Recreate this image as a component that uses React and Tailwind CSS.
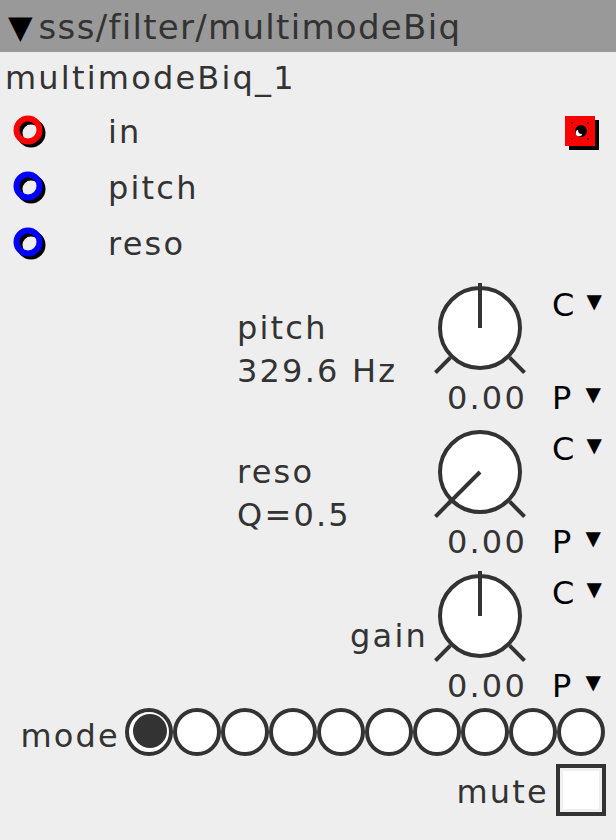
import React from "react";

const font = { fontFamily: '"DejaVu Sans", Verdana, sans-serif' };

// knob drawn around (50,44), angle in degrees clockwise from straight up
const Knob = ({ angle }) => {
    const pt = (a, r) => {
        const t = (a * Math.PI) / 180;
        return [50 + r * Math.sin(t), 44 - r * Math.cos(t)];
    };
    const [nx, ny] = pt(angle, 45);
    const [l1x, l1y] = pt(225, 42);
    const [l2x, l2y] = pt(225, 63);
    const [r1x, r1y] = pt(135, 42);
    const [r2x, r2y] = pt(135, 63);
    return (
        <svg width="100" height="96" viewBox="0 0 100 96" className="overflow-visible block">
            <circle cx="50" cy="44" r="40" fill="#fff" stroke="#333" strokeWidth="4" />
            <line x1={l1x} y1={l1y} x2={l2x} y2={l2y} stroke="#333" strokeWidth="4" />
            <line x1={r1x} y1={r1y} x2={r2x} y2={r2y} stroke="#333" strokeWidth="4" />
            <line x1="50" y1="44" x2={nx} y2={ny} stroke="#333" strokeWidth="4" />
        </svg>
    );
};

const Inlet = ({ color }) => (
    <svg width="40" height="40" viewBox="0 0 40 40" className="block">
        <circle cx="19" cy="21" r="11.5" fill="none" stroke="#000" strokeWidth="6" />
        <circle cx="16" cy="18" r="11.5" fill="none" stroke={color} strokeWidth="6" />
    </svg>
);

const Outlet = () => (
    <svg width="36" height="36" viewBox="0 0 36 36" className="block">
        <rect x="6" y="6" width="30" height="30" fill="#000" />
        <rect x="2" y="2" width="30" height="30" fill="#ff0000" />
        <rect x="8" y="8" width="2" height="2" fill="#700" />
        <rect x="24" y="8" width="2" height="2" fill="#700" />
        <rect x="8" y="24" width="2" height="2" fill="#700" />
        <rect x="24" y="24" width="2" height="2" fill="#700" />
        <circle cx="18" cy="17" r="6" fill="#000" />
        <circle cx="16" cy="19" r="3.2" fill="#fff" />
        <circle cx="18.5" cy="16.5" r="3.4" fill="#000" />
    </svg>
);

const Radio = ({ on }) => (
    <svg width="48" height="48" viewBox="0 0 48 48" className="block shrink-0">
        <circle cx="24" cy="24" r="22" fill="#fff" stroke="#333" strokeWidth="4" />
        {on && <circle cx="25" cy="23" r="17" fill="#333" />}
    </svg>
);

const CP = () => (
    <div className="flex flex-col text-black">
        <div className="h-[36px] leading-[36px] mt-[3px] flex">
            <span>C</span>
            <span className="text-[20px] leading-[20px] ml-[10px] mt-[4px]">▼</span>
        </div>
        <div className="h-[36px] leading-[36px] mt-[57px] flex">
            <span>P</span>
            <span className="text-[20px] leading-[20px] ml-[12px] mt-[4px]">▼</span>
        </div>
    </div>
);

const KnobRow = ({ angle, children, last }) => (
    <div className={`flex ${last ? "h-[136px]" : "h-[144px]"}`}>
        <div className="w-[430px]">{children}</div>
        <div className="w-[100px] flex flex-col">
            <Knob angle={angle} />
            <div className="h-[36px] leading-[36px] text-right pr-[3px]">0.00</div>
        </div>
        <div className="ml-[22px]">
            <CP />
        </div>
    </div>
);

export default function App() {
    const inlets = [
        { name: "in", color: "#ff0000" },
        { name: "pitch", color: "#0000ff" },
        { name: "reso", color: "#0000ff" },
    ];

    return (
        <div
            className="w-[616px] h-[840px] bg-[#eeeeee] text-[#333] text-[32px] tracking-[2.2px] overflow-hidden"
            style={font}
        >
            {/* title bar */}
            <div className="h-[52px] bg-[#999999] flex items-center pl-[8px] pt-[2px] leading-[36px]">
                <span className="text-black text-[32px] tracking-normal">▼</span>
                <span className="ml-[6px] text-[34px] tracking-[1.3px]">sss/filter/multimodeBiq</span>
            </div>

            {/* instance name */}
            <div className="h-[52px] leading-[52px] pl-[5px]">multimodeBiq_1</div>

            {/* inlets */}
            {inlets.map((inl, i) => (
                <div key={inl.name} className="h-[56px] flex items-center">
                    <div className="w-[108px] pl-[12px]">
                        <Inlet color={inl.color} />
                    </div>
                    <div className="leading-[36px]">{inl.name}</div>
                    {i === 0 && (
                        <div className="ml-auto mr-[17px]">
                            <Outlet />
                        </div>
                    )}
                </div>
            ))}

            {/* knobs */}
            <div className="pt-[12px]">
                <KnobRow angle={0}>
                    <div className="pl-[237px] pt-[23px] leading-[43px]">
                        <div>pitch</div>
                        <div>329.6 Hz</div>
                    </div>
                </KnobRow>
                <KnobRow angle={225}>
                    <div className="pl-[237px] pt-[23px] leading-[43px]">
                        <div>reso</div>
                        <div>Q=0.5</div>
                    </div>
                </KnobRow>
                <KnobRow angle={0} last>
                    <div className="pt-[46px] leading-[36px] text-right pr-[2px]">gain</div>
                </KnobRow>
            </div>

            {/* mode selector */}
            <div className="flex h-[50px]">
                <div className="w-[125px] text-right pr-[5px] mt-[10px] leading-[36px]">mode</div>
                <div className="flex">
                    {Array.from({ length: 10 }).map((_, i) => (
                        <Radio key={i} on={i === 0} />
                    ))}
                </div>
            </div>

            {/* mute */}
            <div className="flex justify-end pr-[10px] pt-[6px]">
                <div className="leading-[36px] mt-[10px] mr-[7px]">mute</div>
                <div className="w-[50px] h-[52px] border-[4px] border-[#333] bg-white shadow-[inset_0_0_0_3px_#f0f0f0]" />
            </div>
        </div>
    );
}
